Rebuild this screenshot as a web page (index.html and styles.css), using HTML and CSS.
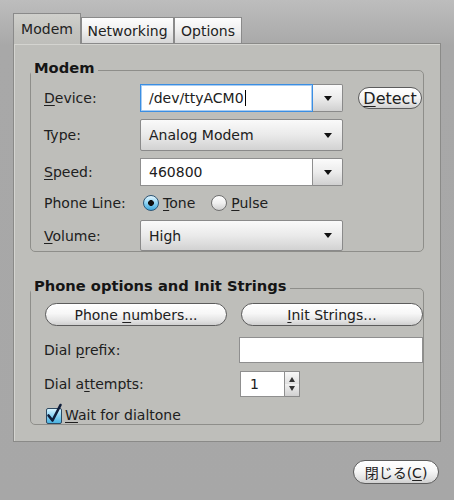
FILE: index.html
```html
<!DOCTYPE html>
<html>
<head>
<meta charset="utf-8">
<link rel="stylesheet" href="styles.css">
</head>
<body>
<div class="window">
  <div class="tabs">
    <div class="tab active">Modem</div>
    <div class="tab tab-net">Networking</div>
    <div class="tab tab-opt">Options</div>
  </div>
  <div class="panel">
    <fieldset class="group g1">
      <legend>Modem</legend>
      <div class="form">
        <div class="lbl"><u>D</u>evice:</div>
        <div class="ctl">
          <div class="combo-entry">
            <div class="entry focus"><span>/dev/ttyACM0</span><span class="caret"></span></div>
            <div class="arrowbtn"><span class="tri"></span></div>
          </div>
          <button class="pill detect"><span><u>D</u>etect</span></button>
        </div>

        <div class="lbl">Type:</div>
        <div class="ctl">
          <div class="combo"><span>Analog Modem</span><span class="tri"></span></div>
        </div>

        <div class="lbl"><u>S</u>peed:</div>
        <div class="ctl">
          <div class="combo-entry">
            <div class="entry"><span>460800</span></div>
            <div class="arrowbtn"><span class="tri"></span></div>
          </div>
        </div>

        <div class="lbl">Phone Line:</div>
        <div class="ctl radios">
          <span class="radio on"></span><span class="rlabel"><u>T</u>one</span>
          <span class="radio pulse"></span><span class="rlabel"><u>P</u>ulse</span>
        </div>

        <div class="lbl"><u>V</u>olume:</div>
        <div class="ctl">
          <div class="combo"><span>High</span><span class="tri"></span></div>
        </div>
      </div>
    </fieldset>

    <fieldset class="group g2">
      <legend>Phone options and Init Strings</legend>
      <div class="form2">
        <div class="btnrow">
          <button class="pill wide first"><span>Phone <u>n</u>umbers...</span></button>
          <button class="pill wide"><span><u>I</u>nit Strings...</span></button>
        </div>
        <div class="frow r-prefix">
          <div class="lbl2">Dial <u>p</u>refix:</div>
          <div class="entry plain prefix"></div>
        </div>
        <div class="frow r-attempts">
          <div class="lbl2">Dial a<u>t</u>tempts:</div>
          <div class="spin">
            <div class="entry spin-entry"><span>1</span></div>
            <div class="spin-btns"><span class="up"></span><span class="down"></span></div>
          </div>
        </div>
        <div class="checkrow">
          <span class="check">
            <svg width="18" height="22" viewBox="0 0 18 22"><path d="M2.5 12.5 L6.5 17.5 L14.5 2" fill="none" stroke="#0f1d3a" stroke-width="2.6" stroke-linecap="round" stroke-linejoin="round"/></svg>
          </span>
          <span class="clabel"><u>W</u>ait for dialtone</span>
        </div>
      </div>
    </fieldset>
  </div>
  <div class="footer">
    <button class="pill close"><span>閉じる(<u>C</u>)</span></button>
  </div>
</div>
</body>
</html>
```

FILE: styles.css
```css
* { box-sizing: border-box; }
html, body { margin: 0; padding: 0; }
body {
  width: 454px;
  height: 500px;
  overflow: hidden;
  background: linear-gradient(to bottom, #bdbdbd 0px, #a8a8a8 46px, #a7a7a7 100%);
  font-family: "DejaVu Sans", "Noto Sans CJK JP", sans-serif;
  font-size: 14px;
  color: #202020;
}
u { text-decoration: underline; text-underline-offset: 2px; }

.window { padding: 13px 0 0 13px; }

.tabs {
  display: flex;
  align-items: flex-end;
  height: 31px;
  margin-bottom: -1px;
  position: relative;
  z-index: 1;
}
.tab {
  height: 27px;
  border: 1px solid #8a8a8a;
  background: linear-gradient(to bottom, #fdfdfd 0%, #efefef 50%, #d6d6d6 100%);
  display: flex;
  align-items: center;
  justify-content: center;
  padding-top: 1px;
  color: #222;
}
.tab.active {
  width: 68px;
  height: 31px;
  border-bottom: none;
  background: linear-gradient(to bottom, #d0d0cc 0%, #c2c2be 60%, #bebeba 100%);
  padding-bottom: 2px;
}
.tab-net { width: 93px; }
.tab-opt { width: 68px; }

.panel {
  width: 428px;
  height: 399px;
  border: 1px solid #8a8a88;
  background: #bebeba;
  box-shadow: inset 1px 1px 0 #d4d4d0;
  padding-top: 15px;
  padding-left: 16px;
}

.group {
  margin: 0;
  width: 394px;
  min-width: 0;
  border: 1px solid #8e8e8a;
  border-radius: 5px;
  padding: 3px 0 0 13px;
}
.group legend {
  font-weight: bold;
  font-size: 14.7px;
  line-height: 17px;
  padding: 0 3px 5px 3px;
  margin-left: -13px;
  color: #151515;
}
.g2 { margin-top: 25px; padding-top: 4px; }

.form {
  display: grid;
  grid-template-columns: 96px 1fr;
  grid-template-rows: 28px 32px 28px 20px 31px;
  row-gap: 7px;
}
.lbl { align-self: center; }
.ctl { display: flex; align-items: center; }

.combo-entry { display: flex; width: 203px; height: 28px; }
.entry {
  background: #fff;
  border: 1px solid #8f8f8f;
  height: 100%;
  display: flex;
  align-items: center;
  padding-left: 8px;
}
.combo-entry .entry { width: 173px; }
.entry.focus {
  border-color: #3b8ee2;
  box-shadow: inset 0 0 0 1px #a9cdf2;
}
.caret {
  display: inline-block;
  width: 1px;
  height: 16px;
  background: #000;
  margin-left: 1px;
}
.arrowbtn {
  width: 30px;
  height: 100%;
  border: 1px solid #8a8a8a;
  border-left: none;
  border-radius: 0 2px 2px 0;
  background: linear-gradient(to bottom, #fbfbfb 0%, #ececec 50%, #d0d0d0 100%);
  display: flex;
  align-items: center;
  justify-content: center;
  padding-left: 1px;
}
.tri {
  width: 0; height: 0;
  border-left: 4px solid transparent;
  border-right: 4px solid transparent;
  border-top: 5px solid #111;
}
.combo {
  width: 203px;
  height: 100%;
  border: 1px solid #8a8a8a;
  border-radius: 2px;
  background: linear-gradient(to bottom, #fafafa 0%, #eaeaea 50%, #d2d2d2 100%);
  display: flex;
  align-items: center;
  justify-content: space-between;
  padding: 0 10px 0 8px;
}

.pill {
  font: inherit;
  color: #202020;
  border: 1px solid #5c5c5c;
  border-radius: 12px;
  background: linear-gradient(to bottom, #ffffff 0%, #f7f7f7 45%, #e2e2e2 80%, #cfcfcf 100%);
  box-shadow: inset 0 1px 0 #fff;
  padding: 0;
  display: flex;
  align-items: center;
  justify-content: center;
  white-space: nowrap;
}
.detect { width: 64px; height: 22px; margin-left: 15px; font-size: 16px; }

.radio {
  width: 16px; height: 16px;
  border-radius: 50%;
  border: 1px solid #5f6f7f;
  display: inline-block;
  flex: none;
}
.radio.on {
  margin-left: 3px;
  border-color: #2c5676;
  background:
    radial-gradient(circle, #101010 0 2.6px, transparent 3.2px),
    linear-gradient(to bottom, #e4f6ff 0%, #8fd4f4 50%, #3fa8dc 100%);
}
.radio.pulse {
  margin-left: 16px;
  border-color: #707070;
  background: linear-gradient(to bottom, #ffffff 0%, #f0f0f0 50%, #cfcfcf 100%);
}
.rlabel { margin-left: 4px; }

.form2 { display: flex; flex-direction: column; }
.btnrow { display: flex; height: 23px; }
.wide { width: 182px; height: 23px; }
.wide.first { margin-left: 1px; margin-right: 14px; }
.frow { display: flex; align-items: center; height: 26px; }
.r-prefix { margin-top: 11px; }
.r-attempts { margin-top: 8px; }
.lbl2 { width: 196px; }
.prefix { width: 184px; }
.spin { display: flex; height: 26px; }
.spin-entry { width: 45px; padding-left: 9px; }
.spin-btns {
  width: 15px;
  border: 1px solid #8a8a8a;
  border-left: none;
  background: linear-gradient(to bottom, #f8f8f8 0%, #e0e0e0 50%, #f0f0f0 51%, #d0d0d0 100%);
  display: flex;
  flex-direction: column;
  align-items: center;
  justify-content: center;
  gap: 4px;
}
.up {
  width: 0; height: 0;
  border-left: 3px solid transparent;
  border-right: 3px solid transparent;
  border-bottom: 5px solid #333;
}
.down {
  width: 0; height: 0;
  border-left: 3px solid transparent;
  border-right: 3px solid transparent;
  border-top: 5px solid #333;
}

.checkrow {
  display: flex;
  align-items: flex-end;
  height: 21px;
  margin-top: 6px;
}
.check {
  position: relative;
  width: 16px; height: 16px;
  margin-left: 2px;
  border: 1px solid #2e4a62;
  border-radius: 2px;
  background: linear-gradient(to bottom, #d8f3ff 0%, #8ad3f3 50%, #4ab2e0 100%);
  flex: none;
}
.check svg { position: absolute; left: -1px; top: -6px; }
.clabel { margin-left: 3px; line-height: 17px; }

.footer {
  display: flex;
  justify-content: flex-end;
  padding-right: 15px;
  margin-top: 18px;
}
.close { width: 86px; height: 24px; }
```
